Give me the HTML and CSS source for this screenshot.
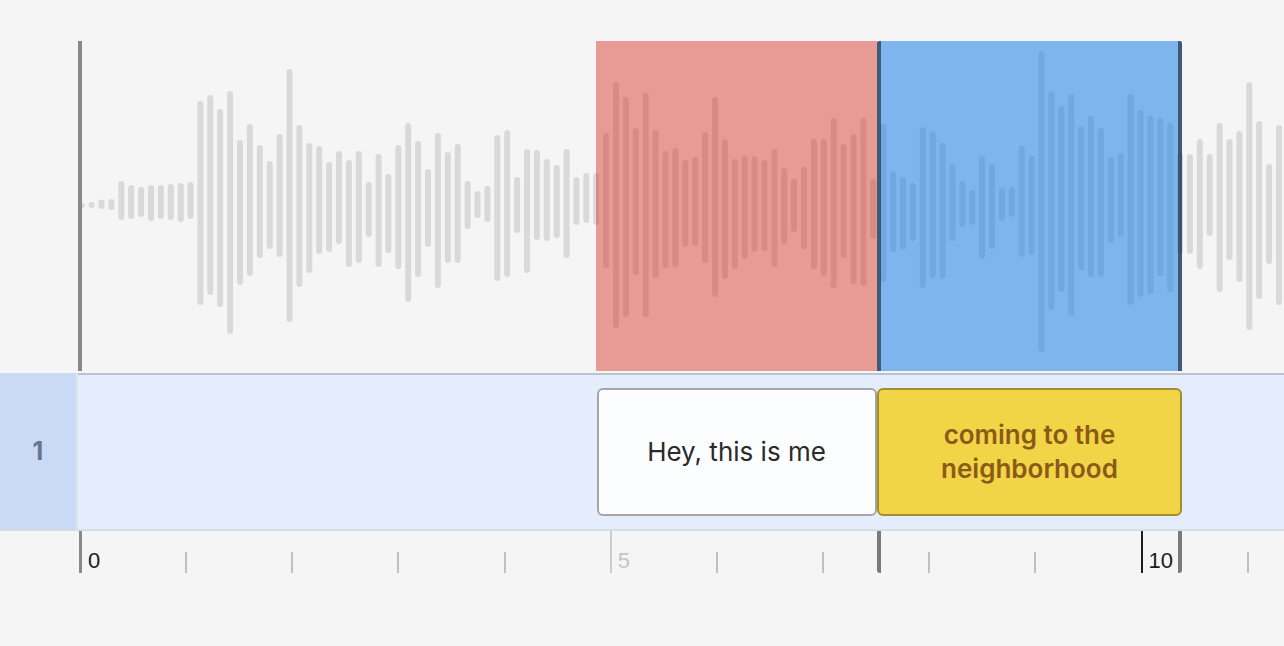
FILE: index.html
```html
<!DOCTYPE html>
<html lang="en">
<head>
<meta charset="utf-8">
<title>Timeline editor</title>
<link rel="stylesheet" href="styles.css">
</head>
<body>
<div class="editor">
  <div class="wave">
    <svg class="wave-svg" width="1206" height="330" viewBox="0 0 1206 330" fill="#d9d9d9">
      <rect x="0.7" y="162" width="6" height="5" rx="2.5"/>
      <rect x="10.6" y="161" width="6" height="6" rx="3"/>
      <rect x="20.5" y="158.5" width="6" height="9.5" rx="3"/>
      <rect x="30.4" y="158" width="6" height="11" rx="3"/>
      <rect x="40.3" y="140" width="6" height="39" rx="3"/>
      <rect x="50.2" y="144" width="6" height="34" rx="3"/>
      <rect x="60.1" y="146" width="6" height="30" rx="3"/>
      <rect x="70.0" y="144" width="6" height="36" rx="3"/>
      <rect x="79.9" y="144" width="6" height="34" rx="3"/>
      <rect x="89.8" y="143" width="6" height="36" rx="3"/>
      <rect x="99.7" y="142" width="6" height="39" rx="3"/>
      <rect x="109.5" y="141" width="6" height="37" rx="3"/>
      <rect x="119.4" y="60" width="6" height="204" rx="3"/>
      <rect x="129.3" y="54" width="6" height="200" rx="3"/>
      <rect x="139.2" y="68" width="6" height="198" rx="3"/>
      <rect x="149.1" y="50" width="6" height="243" rx="3"/>
      <rect x="159.0" y="99" width="6" height="145" rx="3"/>
      <rect x="168.9" y="83" width="6" height="152" rx="3"/>
      <rect x="178.8" y="104" width="6" height="113" rx="3"/>
      <rect x="188.7" y="120" width="6" height="88" rx="3"/>
      <rect x="198.6" y="93" width="6" height="123" rx="3"/>
      <rect x="208.5" y="28" width="6" height="253" rx="3"/>
      <rect x="218.4" y="84" width="6" height="162" rx="3"/>
      <rect x="228.3" y="102" width="6" height="130" rx="3"/>
      <rect x="238.2" y="105" width="6" height="108" rx="3"/>
      <rect x="248.1" y="121" width="6" height="90" rx="3"/>
      <rect x="258.0" y="110" width="6" height="93" rx="3"/>
      <rect x="267.9" y="119" width="6" height="107" rx="3"/>
      <rect x="277.8" y="110" width="6" height="112" rx="3"/>
      <rect x="287.7" y="141" width="6" height="55" rx="3"/>
      <rect x="297.6" y="113" width="6" height="113" rx="3"/>
      <rect x="307.4" y="133" width="6" height="79" rx="3"/>
      <rect x="317.3" y="104" width="6" height="124" rx="3"/>
      <rect x="327.2" y="82" width="6" height="179" rx="3"/>
      <rect x="337.1" y="100" width="6" height="136" rx="3"/>
      <rect x="347.0" y="128" width="6" height="78" rx="3"/>
      <rect x="356.9" y="92" width="6" height="155" rx="3"/>
      <rect x="366.8" y="111" width="6" height="111" rx="3"/>
      <rect x="376.7" y="103" width="6" height="119" rx="3"/>
      <rect x="386.6" y="140" width="6" height="48" rx="3"/>
      <rect x="396.5" y="150" width="6" height="27" rx="3"/>
      <rect x="406.4" y="145" width="6" height="36" rx="3"/>
      <rect x="416.3" y="94" width="6" height="146" rx="3"/>
      <rect x="426.2" y="89" width="6" height="147" rx="3"/>
      <rect x="436.1" y="136" width="6" height="56" rx="3"/>
      <rect x="446.0" y="108" width="6" height="124" rx="3"/>
      <rect x="455.9" y="109" width="6" height="90" rx="3"/>
      <rect x="465.8" y="118" width="6" height="82" rx="3"/>
      <rect x="475.7" y="124" width="6" height="73" rx="3"/>
      <rect x="485.6" y="108" width="6" height="109" rx="3"/>
      <rect x="495.5" y="136" width="6" height="48" rx="3"/>
      <rect x="505.3" y="132" width="6" height="50" rx="3"/>
      <rect x="515.2" y="132" width="6" height="52" rx="3"/>
      <rect x="525.1" y="92" width="6" height="135" rx="3"/>
      <rect x="535.0" y="41" width="6" height="246" rx="3"/>
      <rect x="544.9" y="56" width="6" height="220" rx="3"/>
      <rect x="554.8" y="87" width="6" height="147" rx="3"/>
      <rect x="564.7" y="52" width="6" height="224" rx="3"/>
      <rect x="574.6" y="89" width="6" height="148" rx="3"/>
      <rect x="584.5" y="110" width="6" height="117" rx="3"/>
      <rect x="594.4" y="107" width="6" height="119" rx="3"/>
      <rect x="604.3" y="119" width="6" height="87" rx="3"/>
      <rect x="614.2" y="116" width="6" height="89" rx="3"/>
      <rect x="624.1" y="91" width="6" height="131" rx="3"/>
      <rect x="634.1" y="56" width="6" height="200" rx="3"/>
      <rect x="643.9" y="98" width="6" height="140" rx="3"/>
      <rect x="653.8" y="118" width="6" height="110" rx="3"/>
      <rect x="663.7" y="115" width="6" height="103" rx="3"/>
      <rect x="673.6" y="115" width="6" height="96" rx="3"/>
      <rect x="683.5" y="119" width="6" height="91" rx="3"/>
      <rect x="693.4" y="108" width="6" height="118" rx="3"/>
      <rect x="703.2" y="127" width="6" height="76" rx="3"/>
      <rect x="713.1" y="138" width="6" height="53" rx="3"/>
      <rect x="723.0" y="126" width="6" height="82" rx="3"/>
      <rect x="732.9" y="98" width="6" height="130" rx="3"/>
      <rect x="742.8" y="98" width="6" height="137" rx="3"/>
      <rect x="752.7" y="77" width="6" height="170" rx="3"/>
      <rect x="762.6" y="103" width="6" height="114" rx="3"/>
      <rect x="772.5" y="93" width="6" height="150" rx="3"/>
      <rect x="782.4" y="77" width="6" height="168" rx="3"/>
      <rect x="792.3" y="138" width="6" height="60" rx="3"/>
      <rect x="802.2" y="83" width="6" height="158" rx="3"/>
      <rect x="812.1" y="130" width="6" height="81" rx="3"/>
      <rect x="822.0" y="136" width="6" height="73" rx="3"/>
      <rect x="831.9" y="142" width="6" height="58" rx="3"/>
      <rect x="841.8" y="86" width="6" height="161" rx="3"/>
      <rect x="851.7" y="90" width="6" height="147" rx="3"/>
      <rect x="861.6" y="102" width="6" height="136" rx="3"/>
      <rect x="871.5" y="123" width="6" height="77" rx="3"/>
      <rect x="881.4" y="140" width="6" height="46" rx="3"/>
      <rect x="891.3" y="149" width="6" height="35" rx="3"/>
      <rect x="901.1" y="115" width="6" height="103" rx="3"/>
      <rect x="911.0" y="123" width="6" height="85" rx="3"/>
      <rect x="920.9" y="147" width="6" height="33" rx="3"/>
      <rect x="930.8" y="146" width="6" height="30" rx="3"/>
      <rect x="940.7" y="105" width="6" height="111" rx="3"/>
      <rect x="950.6" y="115" width="6" height="99" rx="3"/>
      <rect x="960.5" y="10" width="6" height="301" rx="3"/>
      <rect x="970.4" y="50" width="6" height="219" rx="3"/>
      <rect x="980.3" y="65" width="6" height="186" rx="3"/>
      <rect x="990.2" y="53" width="6" height="222" rx="3"/>
      <rect x="1000.1" y="85" width="6" height="144" rx="3"/>
      <rect x="1010.0" y="75" width="6" height="161" rx="3"/>
      <rect x="1019.9" y="87" width="6" height="149" rx="3"/>
      <rect x="1029.8" y="116" width="6" height="86" rx="3"/>
      <rect x="1039.7" y="112" width="6" height="84" rx="3"/>
      <rect x="1049.6" y="53" width="6" height="211" rx="3"/>
      <rect x="1059.5" y="69" width="6" height="187" rx="3"/>
      <rect x="1069.4" y="75" width="6" height="178" rx="3"/>
      <rect x="1079.3" y="77" width="6" height="158" rx="3"/>
      <rect x="1089.2" y="82" width="6" height="169" rx="3"/>
      <rect x="1099.0" y="112" width="6" height="101" rx="3"/>
      <rect x="1108.9" y="113" width="6" height="100" rx="3"/>
      <rect x="1118.8" y="98" width="6" height="130" rx="3"/>
      <rect x="1128.7" y="113" width="6" height="82" rx="3"/>
      <rect x="1138.6" y="82" width="6" height="169" rx="3"/>
      <rect x="1148.5" y="98" width="6" height="121" rx="3"/>
      <rect x="1158.4" y="90" width="6" height="151" rx="3"/>
      <rect x="1168.3" y="41" width="6" height="248" rx="3"/>
      <rect x="1178.2" y="80" width="6" height="178" rx="3"/>
      <rect x="1188.1" y="123" width="6" height="100" rx="3"/>
      <rect x="1198.0" y="84" width="6" height="180" rx="3"/>
    </svg>
    <div class="region region-red" style="left: 518px; width: 281px;"></div>
    <div class="region region-blue" style="left: 799px; width: 305px;"></div>
    <div class="axis"></div>
  </div>

  <div class="track">
    <div class="track-label">1</div>
    <div class="lane">
      <div class="clip clip-plain">Hey, this is me</div>
      <div class="clip clip-active">coming to the neighborhood</div>
    </div>
  </div>

  <div class="ruler">
    <div class="sec"><span class="tick tick-axis"></span><span class="num">0</span></div>
    <div class="sec"><span class="tick"></span></div>
    <div class="sec"><span class="tick"></span></div>
    <div class="sec"><span class="tick"></span></div>
    <div class="sec"><span class="tick"></span></div>
    <div class="sec"><span class="tick tick-faint"></span><span class="num num-faint">5</span></div>
    <div class="sec"><span class="tick"></span></div>
    <div class="sec"><span class="tick"></span></div>
    <div class="sec"><span class="tick"></span></div>
    <div class="sec"><span class="tick"></span></div>
    <div class="sec"><span class="tick tick-now"></span><span class="num">10</span></div>
    <div class="sec sec-last"><span class="tick"></span></div>
    <div class="ruler-handles" style="left: 798px; width: 305px;"></div>
  </div>
</div>
</body>
</html>
```

FILE: styles.css
```css
html, body {
  margin: 0;
  padding: 0;
  width: 1284px;
  height: 646px;
  overflow: hidden;
  background: #f5f5f5;
}

.editor {
  padding-top: 41px;
  font-family: Inter, "Noto Sans", sans-serif;
}

/* waveform */
.wave {
  position: relative;
  margin-left: 78px;
  height: 330px;
}

.wave-svg {
  display: block;
}

.region {
  position: absolute;
  top: 0;
  bottom: 0;
  box-sizing: border-box;
}

.region-red {
  background: rgba(214, 37, 21, 0.43);
}

.region-blue {
  background: rgba(30, 128, 234, 0.55);
  border-left: 4px solid rgba(0, 0, 0, 0.5);
  border-right: 4px solid rgba(0, 0, 0, 0.5);
  border-radius: 2px 2px 0 0;
}

.axis {
  position: absolute;
  left: 0;
  top: 0;
  bottom: 0;
  width: 4px;
  background: #898989;
}

/* track row */
.track {
  display: flex;
  margin-top: 2px;
  height: 158px;
  box-sizing: border-box;
  border-bottom: 2px solid #d8dce3;
}

.track-label {
  width: 76px;
  flex: none;
  background: #cadaf5;
  border-right: 2px solid #dde3ec;
  display: flex;
  align-items: center;
  justify-content: center;
  font-size: 25px;
  font-weight: 700;
  color: #6a7490;
}

.lane {
  flex: 1;
  display: flex;
  align-items: center;
  background: #e5edfc;
  border-top: 2px solid #bcc3cf;
  padding-left: 518.5px;
}

.clip {
  box-sizing: border-box;
  height: 128px;
  flex: none;
  border: 2px solid;
  border-radius: 6px;
  display: flex;
  align-items: center;
  justify-content: center;
  text-align: center;
  font-size: 26px;
  line-height: 34px;
  padding: 0 10px;
}

.clip-plain {
  width: 280px;
  background: #fcfdff;
  border-color: #a5a5a5;
  color: #2a2a2a;
}

.clip-active {
  width: 305px;
  margin-left: 0.5px;
  background: #f2d447;
  border-color: #a48c33;
  color: #8a5a18;
  font-weight: 600;
}

/* ruler */
.ruler {
  position: relative;
  display: flex;
  margin-left: 79px;
  width: 1205px;
  overflow: hidden;
  height: 42px;
  font-family: "Liberation Sans", Arial, sans-serif;
  font-size: 22px;
  line-height: 22px;
  color: #1b1b1b;
}

.sec {
  flex: 0 0 106.17px;
  display: flex;
  align-items: flex-start;
}

.sec-last {
  flex: 0 0 37px;
}

.tick {
  width: 2px;
  height: 21px;
  margin-top: 21px;
  background: #c0c0c0;
  flex: none;
}

.tick-axis {
  width: 4px;
  height: 42px;
  margin-top: 0;
  margin-left: -1px;
  background: #898989;
  border-radius: 0 0 0 2px;
}

.tick-faint {
  height: 42px;
  margin-top: 0;
  background: #cccccc;
}

.tick-now {
  height: 42px;
  margin-top: 0;
  background: #1e1e1e;
}

.num {
  margin-left: 6px;
  margin-top: 19px;
}

.num-faint {
  color: #c4c4c4;
}

.ruler-handles {
  position: absolute;
  top: 0;
  height: 42px;
  box-sizing: border-box;
  border-left: 4px solid #7a7a7a;
  border-right: 4px solid #7a7a7a;
  border-radius: 0 0 3px 3px;
}
```
